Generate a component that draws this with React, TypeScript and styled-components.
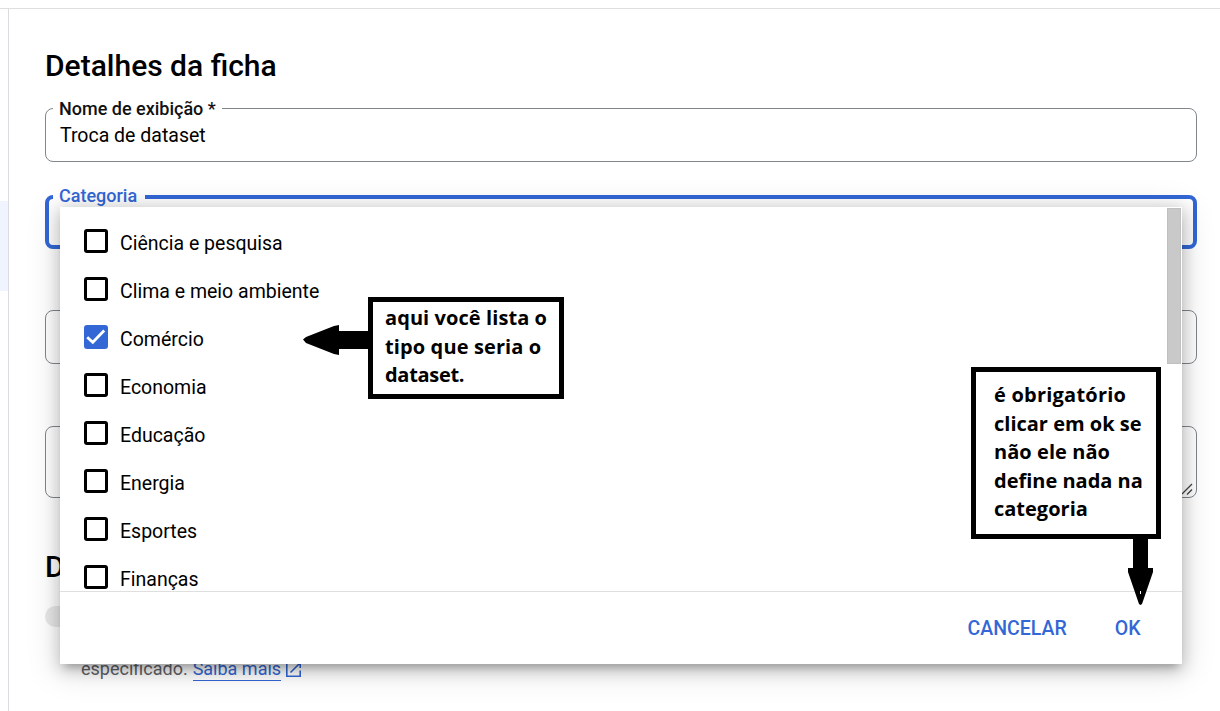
import React from "react";
import styled, { createGlobalStyle } from "styled-components";

const BLUE = "#3367d6";

const GlobalStyle = createGlobalStyle`
  * { box-sizing: border-box; }
  body { margin: 0; background: #fff; font-family: Roboto, sans-serif; color: #000; overflow: hidden; }
`;

const Page = styled.div`
  position: relative;
  display: flex;
  flex-direction: column;
  width: 1220px;
  height: 711px;
  padding-top: 8px;
  overflow: hidden;
`;

const Body = styled.div`
  display: flex;
  flex: 1;
  min-height: 0;
  border-top: 1px solid #dfdfdf;
`;

const Rail = styled.nav`
  width: 9px;
  padding-top: 192px;
  border-right: 1px solid #dadce0;
`;

const RailActive = styled.div`
  height: 90px;
  background: #f0f4ff;
`;

const Main = styled.main`
  flex: 1;
  padding: 39px 23px 0 36px;
`;

const Heading = styled.h2<{ $gap?: number }>`
  margin: ${(p) => p.$gap ?? 0}px 0 0;
  height: 36px;
  font-size: 30px;
  line-height: 36px;
  font-weight: 500;
  white-space: nowrap;
`;

const Field = styled.div<{ $gap: number; $height?: number; $focused?: boolean }>`
  position: relative;
  margin-top: ${(p) => p.$gap}px;
  height: ${(p) => p.$height ?? 54}px;
  padding: ${(p) => (p.$focused ? "12px" : "15px")} 14px 0;
  border: ${(p) => (p.$focused ? `4px solid ${BLUE}` : "1px solid #80868b")};
  border-radius: 8px;
  font-size: 19.5px;
  line-height: 24px;
`;

const FieldLabel = styled.label<{ $width: number; $focused?: boolean }>`
  position: absolute;
  top: ${(p) => (p.$focused ? "-15px" : "-12px")};
  left: ${(p) => (p.$focused ? "4px" : "7px")};
  width: ${(p) => p.$width}px;
  padding-left: 6px;
  background: #fff;
  color: ${(p) => (p.$focused ? BLUE : "#111")};
  font-size: 18px;
  line-height: 22px;
  font-weight: 500;
  white-space: nowrap;
  transform: translateY(0.5px);
`;

const FieldValue = styled.span`
  display: inline-block;
`;

const Grip = styled.svg`
  position: absolute;
  right: 3px;
  bottom: 2px;
`;

const ToggleRow = styled.div`
  display: flex;
  margin-top: 21px;
`;

const ToggleTrack = styled.div`
  width: 54px;
  height: 21px;
  border-radius: 11px;
  background: #e8e8e8;
`;

const Hint = styled.p`
  display: flex;
  align-items: center;
  margin: 30px 0 0 36px;
  height: 24px;
  font-size: 18px;
  color: #5f6368;
`;

const HintText = styled.span`
  padding-bottom: 2px;
`;

const HintLink = styled.a`
  margin: 0 4px 0 5px;
  color: ${BLUE};
  line-height: 22px;
  border-bottom: 1px solid ${BLUE};
`;

const Panel = styled.section`
  position: absolute;
  left: 60px;
  top: 207px;
  display: flex;
  flex-direction: column;
  width: 1122px;
  height: 457px;
  background: #fff;
  box-shadow:
    0 7.5px 7.5px -4.5px rgba(0, 0, 0, 0.2),
    0 4.5px 15px 1.5px rgba(0, 0, 0, 0.2),
    0 4.5px 30px 4px rgba(0, 0, 0, 0.12);
`;

const Scroller = styled.div`
  display: flex;
  justify-content: space-between;
  height: 384px;
  padding: 1px 1px 0 24px;
  overflow: hidden;
`;

const Options = styled.ul`
  margin: 9px 0 0;
  padding: 0;
  list-style: none;
`;

const Option = styled.li`
  display: flex;
  align-items: center;
  gap: 12px;
  height: 48px;
  font-size: 19.5px;
  white-space: nowrap;
`;

const OptionText = styled.span`
  padding-top: 6px;
  line-height: 24px;
`;

const Box = styled.span<{ $checked?: boolean }>`
  display: flex;
  width: 24px;
  height: 24px;
  border: ${(p) => (p.$checked ? "0" : "3px solid #000")};
  border-radius: 3px;
  background: ${(p) => (p.$checked ? BLUE : "#fff")};
`;

const ScrollThumb = styled.div`
  width: 14px;
  height: 156px;
  background: #c9c9c9;
  border: 1px solid #c0c0c0;
`;

const Actions = styled.footer`
  display: flex;
  flex: 1;
  justify-content: flex-end;
  align-items: center;
  gap: 48px;
  padding: 0 41.5px 0 0;
  border-top: 1px solid #dfdfdf;
`;

const Action = styled.button`
  padding: 2px 0 0;
  border: 0;
  background: none;
  color: ${BLUE};
  font: 500 19.5px/24px Roboto, sans-serif;
`;

const Callout = styled.aside<{ $x: number; $y: number; $w: number; $h: number; $pad: string }>`
  position: absolute;
  left: ${(p) => p.$x}px;
  top: ${(p) => p.$y}px;
  width: ${(p) => p.$w}px;
  height: ${(p) => p.$h}px;
  padding: ${(p) => p.$pad};
  border: 5px solid #000;
  background: #fff;
  font: 700 20px/28.5px "Open Sans", "Noto Sans", sans-serif;
`;

const CalloutLine = styled.div<{ $spacing?: number }>`
  letter-spacing: ${(p) => p.$spacing ?? 0}px;
  white-space: nowrap;
`;

const Arrow = styled.svg<{ $x: number; $y: number }>`
  position: absolute;
  left: ${(p) => p.$x}px;
  top: ${(p) => p.$y}px;
`;

const categories = [
  "Ciência e pesquisa",
  "Clima e meio ambiente",
  "Comércio",
  "Economia",
  "Educação",
  "Energia",
  "Esportes",
  "Finanças",
];

const listNote = [
  { text: "aqui você lista o", spacing: 0.08 },
  { text: "tipo que seria o", spacing: 0.12 },
  { text: "dataset.", spacing: -0.3 },
];
const okNote = [
  { text: "é obrigatório", spacing: 0.22 },
  { text: "clicar em ok se", spacing: 0 },
  { text: "não ele não", spacing: 0.06 },
  { text: "define nada na", spacing: 0 },
  { text: "categoria", spacing: 0 },
];

export default function App() {
  return (
    <>
      <GlobalStyle />
      <Page>
        <Body>
          <Rail>
            <RailActive />
          </Rail>
          <Main>
            <Heading>Detalhes da ficha</Heading>
            <Field $gap={24}>
              <FieldLabel $width={169}>Nome de exibição *</FieldLabel>
              <FieldValue>Troca de dataset</FieldValue>
            </Field>
            <Field $gap={33} $focused>
              <FieldLabel $width={92} $focused>
                Categoria
              </FieldLabel>
            </Field>
            <Field $gap={61} />
            <Field $gap={62} $height={72}>
              <Grip width="12" height="12" viewBox="0 0 12 12" stroke="#444" strokeWidth="1.3">
                <path d="M1 11L11 1M6 11.5L11 6.5" />
              </Grip>
            </Field>
            <Heading $gap={51}>Dados</Heading>
            <ToggleRow>
              <ToggleTrack />
            </ToggleRow>
            <Hint>
              <HintText>especificado.</HintText>
              <HintLink>Saiba mais</HintLink>
              <svg width="17" height="17" viewBox="0 0 17 17" fill="none" stroke={BLUE} strokeWidth="1.6">
                <path d="M7 1.8H1.8V15.2H15.2V9.5M10 1.8H15.2V7M15 2L5.5 11.5" />
              </svg>
            </Hint>
          </Main>
        </Body>

        <Panel>
          <Scroller>
            <Options>
              {categories.map((name) => {
                const checked = name === "Comércio";
                return (
                  <Option key={name}>
                    <Box $checked={checked}>
                      {checked && (
                        <svg width="24" height="24" viewBox="0 0 24 24" fill="none" stroke="#fff" strokeWidth="2.8">
                          <path d="M3.2 12.2L8.8 17.2L20.2 5.6" />
                        </svg>
                      )}
                    </Box>
                    <OptionText>{name}</OptionText>
                  </Option>
                );
              })}
            </Options>
            <ScrollThumb />
          </Scroller>
          <Actions>
            <Action>CANCELAR</Action>
            <Action>OK</Action>
          </Actions>
        </Panel>

        <Arrow $x={303} $y={325} width="66" height="30" viewBox="0 0 66 30">
          <path d="M0 14.5L3 12L31 1L36 0V6H66V24H36V30L31 29L3 18Z" />
        </Arrow>
        <Callout $x={368} $y={297} $w={196} $h={102} $pad="2px 0 0 12px">
          {listNote.map((line) => (
            <CalloutLine key={line.text} $spacing={line.spacing}>
              {line.text}
            </CalloutLine>
          ))}
        </Callout>

        <Arrow $x={1128} $y={538} width="25" height="67" viewBox="0 0 25 67">
          <path d="M5 0H20V30H25V34L14 66L12.5 67L11 66L0 34V30H5Z" />
          <path d="M12 53H13V56H12Z" fill="#fff" />
        </Arrow>
        <Callout $x={971} $y={367} $w={190} $h={172} $pad="9px 0 0 18px">
          {okNote.map((line) => (
            <CalloutLine key={line.text} $spacing={line.spacing}>
              {line.text}
            </CalloutLine>
          ))}
        </Callout>
      </Page>
    </>
  );
}
